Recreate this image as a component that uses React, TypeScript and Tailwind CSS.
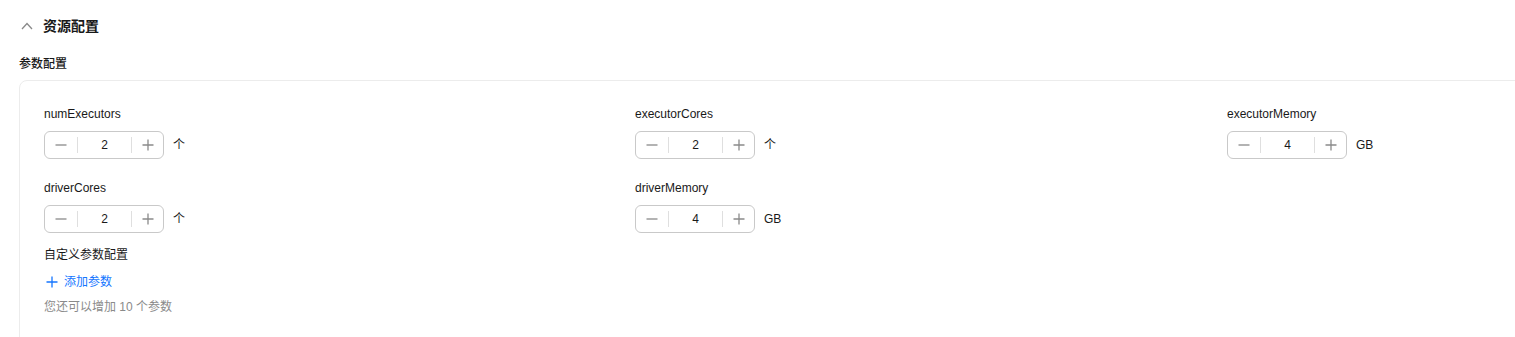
import { useState } from "react";

type Field = {
  key: string;
  value: number;
  unit: string;
};

const rows: Field[][] = [
  [
    { key: "numExecutors", value: 2, unit: "个" },
    { key: "executorCores", value: 2, unit: "个" },
    { key: "executorMemory", value: 4, unit: "GB" },
  ],
  [
    { key: "driverCores", value: 2, unit: "个" },
    { key: "driverMemory", value: 4, unit: "GB" },
  ],
];

const font = "font-['Liberation_Sans','Noto_Sans_CJK_SC',sans-serif]";

function Stepper({ initial }: { initial: number }) {
  const [value, setValue] = useState(initial);

  return (
    <div className="flex h-[28px] w-[120px] items-center rounded-[6px] border border-[#c9c9c9] bg-white">
      <button
        type="button"
        onClick={() => setValue((v) => Math.max(0, v - 1))}
        className="flex h-full w-[32px] items-center justify-center text-[#8a8a8a]"
      >
        <svg width="14" height="14" viewBox="0 0 14 14" fill="none">
          <path d="M1.5 7h11" stroke="currentColor" strokeWidth="1.3" />
        </svg>
      </button>
      <span className="h-[16px] w-px bg-[#dfdfdf]" />
      <div className="flex-1 text-center text-[12px] text-[#191919]">
        {value}
      </div>
      <span className="h-[16px] w-px bg-[#dfdfdf]" />
      <button
        type="button"
        onClick={() => setValue((v) => v + 1)}
        className="flex h-full w-[31px] items-center justify-center text-[#8a8a8a]"
      >
        <svg width="14" height="14" viewBox="0 0 14 14" fill="none">
          <path d="M1.5 7h11M7 1.5v11" stroke="currentColor" strokeWidth="1.3" />
        </svg>
      </button>
    </div>
  );
}

function App() {
  return (
    <div className={`${font} h-[337px] overflow-hidden bg-white text-[#191919]`}>
      <header className="flex h-[20px] items-center pl-[21px] mt-[16px]">
        <svg width="12" height="8" viewBox="0 0 12 8" fill="none" className="text-[#8a8a8a]">
          <path d="M1 7l5-5.5L11 7" stroke="currentColor" strokeWidth="1.3" />
        </svg>
        <h1 className="ml-[10px] text-[14px] font-bold leading-[20px]">资源配置</h1>
      </header>

      <div className="mt-[19px] pl-[19px] text-[12px] font-medium leading-[18px]">
        参数配置
      </div>

      <div className="ml-[19px] mt-[7px] h-[300px] w-[1520px] rounded-[8px] border border-[#ececec] pl-[24px] pt-[25px]">
        <div className="flex flex-col gap-[21px]">
          {rows.map((row, i) => (
            <div key={i} className="grid grid-cols-[591px_592px_300px]">
              {row.map((f) => (
                <div key={f.key}>
                  <div className="text-[12px] leading-[16px]">{f.key}</div>
                  <div className="mt-[9px] flex items-center">
                    <Stepper initial={f.value} />
                    <span className="ml-[9px] text-[12px]">{f.unit}</span>
                  </div>
                </div>
              ))}
            </div>
          ))}
        </div>

        <div className="mt-[13px] text-[12px] leading-[18px]">自定义参数配置</div>
        <button
          type="button"
          className="mt-[9px] flex items-center text-[12px] leading-[18px] text-[#1476ff]"
        >
          <svg width="12" height="12" viewBox="0 0 12 12" fill="none" className="ml-[2px]">
            <path d="M0.5 6h11M6 0.5v11" stroke="currentColor" strokeWidth="1.3" />
          </svg>
          <span className="ml-[6px]">添加参数</span>
        </button>
        <div className="mt-[7px] text-[12px] leading-[18px] text-[#8a8a8a]">
          您还可以增加 10 个参数
        </div>
      </div>
    </div>
  );
}

export default App;
